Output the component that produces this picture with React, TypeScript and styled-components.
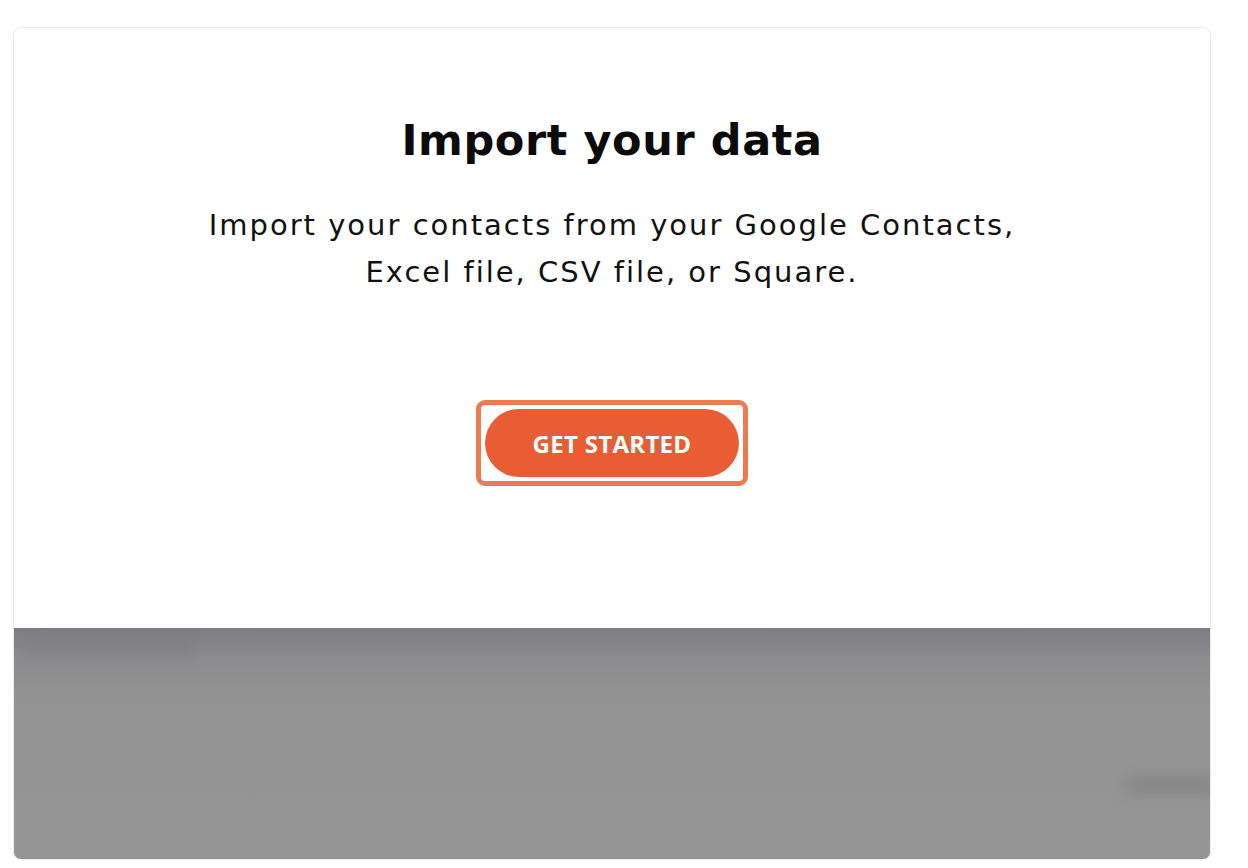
import styled, { createGlobalStyle } from 'styled-components';

const GlobalStyle = createGlobalStyle`
  html, body {
    margin: 0;
    padding: 0;
    background: #ffffff;
  }
  body {
    font-family: "DejaVu Sans", "Noto Sans", sans-serif;
  }
`;

const App = () => {
  return (
    <>
      <GlobalStyle />
      <Styled.Page>
        <Styled.Card>
          <Styled.Intro>
            <Styled.Title>Import your data</Styled.Title>
            <Styled.Text>
              Import your contacts from your Google Contacts,
              <br />
              Excel file, CSV file, or Square.
            </Styled.Text>
            <Styled.Focus>
              <Styled.Button type='button'>GET STARTED</Styled.Button>
            </Styled.Focus>
          </Styled.Intro>
          <Styled.Shade>
            <Styled.Blur $top={12} $left={10} $width={170} />
            <Styled.Blur $top={150} $right={-10} $width={95} />
          </Styled.Shade>
        </Styled.Card>
      </Styled.Page>
    </>
  );
};

export default App;

const Styled = {
  Page: styled.div`
    padding: 27px 37px 10px 13px;
  `,
  Card: styled.div`
    display: flex;
    flex-direction: column;
    height: 831px;
    border: 1px solid #ececee;
    border-radius: 8px;
    overflow: hidden;
    background: #fff;
  `,
  Intro: styled.div`
    display: flex;
    flex-direction: column;
    align-items: center;
    padding-top: 79px;
    height: 600px;
    box-sizing: border-box;
  `,
  Title: styled.h1`
    margin: 0;
    font-size: 43px;
    font-weight: 700;
    color: #0b0b0b;
    letter-spacing: 0.6px;
    line-height: 66px;
  `,
  Text: styled.p`
    margin: 29px 0 0;
    font-size: 29px;
    font-weight: 400;
    color: #111;
    text-align: center;
    line-height: 47px;
    letter-spacing: 2px;
  `,
  Focus: styled.div`
    margin-top: 104px;
    padding: 4px;
    border: 5px solid #ee7a4f;
    border-radius: 9px;
    background: #fff;
  `,
  Button: styled.button`
    display: block;
    width: 254px;
    height: 68px;
    border: none;
    border-radius: 34px;
    background: #e85d33;
    color: #fff;
    font-family: "Open Sans", sans-serif;
    font-weight: 700;
    font-size: 24px;
    letter-spacing: 0.3px;
    cursor: pointer;
  `,
  Shade: styled.div`
    position: relative;
    flex: 1;
    background: linear-gradient(#7c7c82 0px, #8c8c8e 30px, #949494 80px, #959595 100%);
    overflow: hidden;
  `,
  Blur: styled.div<{ $top: number; $left?: number; $right?: number; $width: number }>`
    position: absolute;
    top: ${(p) => p.$top}px;
    ${(p) => (p.$left !== undefined ? `left: ${p.$left}px;` : '')}
    ${(p) => (p.$right !== undefined ? `right: ${p.$right}px;` : '')}
    width: ${(p) => p.$width}px;
    height: 14px;
    border-radius: 7px;
    background: #7e7e80;
    filter: blur(8px);
    opacity: 0.8;
  `,
};
